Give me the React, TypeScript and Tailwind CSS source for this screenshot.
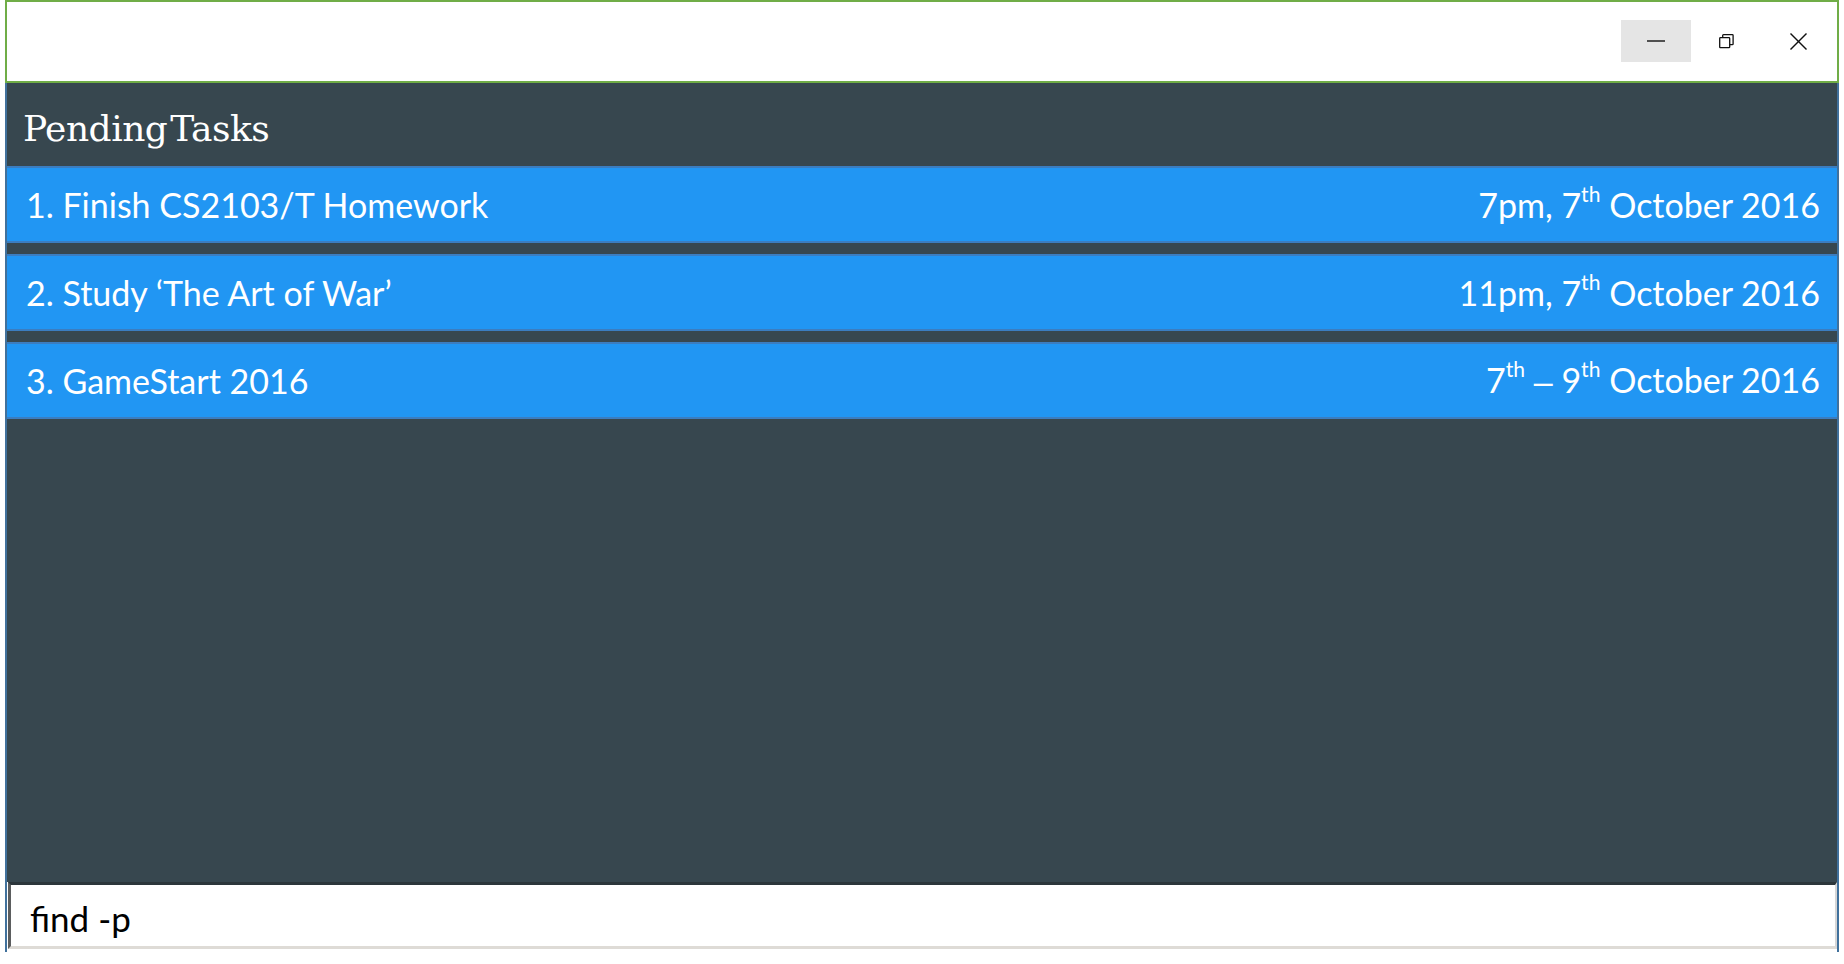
import React from "react";

const sans = "font-['Lato','Open_Sans',sans-serif]";

function Sup({ children }: { children: React.ReactNode }) {
  return <sup className="text-[0.62em] relative top-[-0.78em] leading-none">{children}</sup>;
}

const rows: { left: React.ReactNode; right: React.ReactNode }[] = [
  {
    left: "1. Finish CS2103/T Homework",
    right: (
      <>
        7pm, 7<Sup>th</Sup> October 2016
      </>
    ),
  },
  {
    left: "2. Study \u2018The Art of War\u2019",
    right: (
      <>
        11pm, 7<Sup>th</Sup> October 2016
      </>
    ),
  },
  {
    left: "3. GameStart 2016",
    right: (
      <>
        7<Sup>th</Sup> <span className="font-['Liberation_Sans',sans-serif]">{"\u2013"}</span> 9<Sup>th</Sup> October 2016
      </>
    ),
  },
];

export default function App() {
  return (
    <div className="w-[1844px] h-[964px] bg-white pl-[5px] overflow-hidden">
      <div className="w-[1834px] flex flex-col">
        {/* Title bar */}
        <div className="h-[83px] border-2 border-[#70ad47] bg-white flex justify-end items-start pt-[18px] pr-[3px]">
          <div className="w-[70px] h-[42px] bg-[#e5e5e5] flex items-center justify-center">
            <svg width="18" height="2" viewBox="0 0 18 2">
              <line x1="0" y1="1" x2="18" y2="1" stroke="#111" strokeWidth="1.4" />
            </svg>
          </div>
          <div className="w-[71px] h-[42px] flex items-center justify-center">
            <svg width="15" height="15" viewBox="0 0 15 15" fill="none" stroke="#111" strokeWidth="1.3">
              <rect x="0.7" y="3.7" width="10" height="10" rx="0.8" />
              <path d="M3.7 3.7 V1.5 Q3.7 0.7 4.5 0.7 H13.3 Q14.1 0.7 14.1 1.5 V10 Q14.1 10.7 13.3 10.7 H10.7" />
            </svg>
          </div>
          <div className="w-[72px] h-[42px] flex items-center justify-center">
            <svg width="17" height="17" viewBox="0 0 17 17" fill="none" stroke="#111" strokeWidth="1.4">
              <line x1="0.5" y1="0.5" x2="16.5" y2="16.5" />
              <line x1="16.5" y1="0.5" x2="0.5" y2="16.5" />
            </svg>
          </div>
        </div>

        {/* Body */}
        <div className="h-[869px] border-x-2 border-[#41719c] flex flex-col bg-white">
          <div className="flex-1 bg-[#37474f] flex flex-col">
            <div className="h-[83px] flex items-center pl-[16px] pt-[8px]">
              <span className="font-['DejaVu_Serif',serif] text-[36px] text-white tracking-[-0.5px] [word-spacing:-8px]">
                Pending Tasks
              </span>
            </div>
            <div className="flex flex-col gap-[11px]">
              {rows.map((r, i) => (
                <div
                  key={i}
                  className={`h-[77px] bg-[#2196f3] border-y-2 border-[#3b7dc0] flex items-center justify-between pl-[19px] pr-[17px] text-white text-[34px] ${sans}`}
                >
                  <span>{r.left}</span>
                  <span>{r.right}</span>
                </div>
              ))}
            </div>
          </div>
          <div className="h-[67px] ml-[1px] bg-white border-t-[3px] border-t-[#2c363b] border-l-[3px] border-l-[#5b5d5e] border-r-[2px] border-r-[#d6d6d6] border-b-[3px] border-b-[#dedbd6] flex items-center pl-[19px] pt-[6px]">
            <span className={`text-black text-[35px] ${sans}`}>find -p</span>
          </div>
          <div className="h-[3px] bg-white" />
        </div>
      </div>
    </div>
  );
}
